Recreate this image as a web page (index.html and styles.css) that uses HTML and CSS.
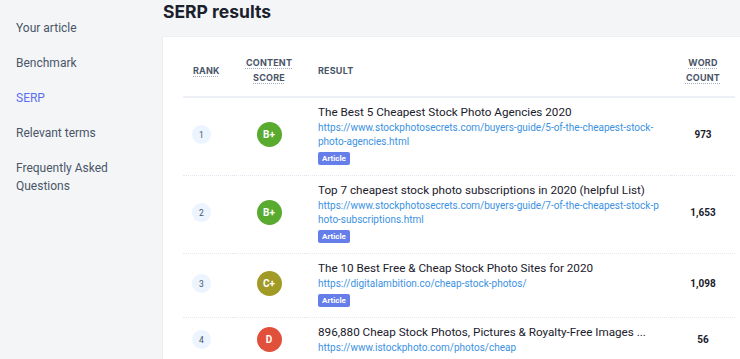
FILE: index.html
```html
<!DOCTYPE html>
<html lang="en">
<head>
    <meta charset="UTF-8">
    <meta name="viewport" content="width=device-width, initial-scale=1.0">
    <title>SERP results</title>
    <link rel="stylesheet" href="styles.css">
</head>
<body>

<div class="layout">
    <!-- Sidebar navigation -->
    <nav class="sidebar">
        <a href="#" class="nav-item">Your article</a>
        <a href="#" class="nav-item">Benchmark</a>
        <a href="#" class="nav-item active">SERP</a>
        <a href="#" class="nav-item">Relevant terms</a>
        <a href="#" class="nav-item">Frequently Asked Questions</a>
    </nav>

    <main class="content">
        <h1>SERP results</h1>

        <div class="card">
            <table class="serp">
                <colgroup>
                    <col class="col-rank">
                    <col class="col-score">
                    <col class="col-result">
                    <col class="col-words">
                </colgroup>
                <thead>
                    <tr>
                        <th class="th-rank"><abbr>Rank</abbr></th>
                        <th class="th-score"><abbr>Content score</abbr></th>
                        <th class="th-result">Result</th>
                        <th class="th-words"><abbr>Word count</abbr></th>
                    </tr>
                </thead>
                <tbody>
                    <tr>
                        <td><span class="rank">1</span></td>
                        <td class="center"><span class="score score-b">B+</span></td>
                        <td class="result">
                            <div class="result-inner">
                                <div class="title">The Best 5 Cheapest Stock Photo Agencies 2020</div>
                                <a class="url" href="#">https://www.stockphotosecrets.com/buyers-guide/5-of-the-cheapest-stock-photo-agencies.html</a>
                                <span class="badge">Article</span>
                            </div>
                        </td>
                        <td class="words">973</td>
                    </tr>
                    <tr>
                        <td><span class="rank">2</span></td>
                        <td class="center"><span class="score score-b">B+</span></td>
                        <td class="result">
                            <div class="result-inner">
                                <div class="title">Top 7 cheapest stock photo subscriptions in 2020 (helpful List)</div>
                                <a class="url" href="#">https://www.stockphotosecrets.com/buyers-guide/7-of-the-cheapest-stock-p<wbr>hoto-subscriptions.html</a>
                                <span class="badge">Article</span>
                            </div>
                        </td>
                        <td class="words">1,653</td>
                    </tr>
                    <tr>
                        <td><span class="rank">3</span></td>
                        <td class="center"><span class="score score-c">C+</span></td>
                        <td class="result">
                            <div class="result-inner">
                                <div class="title">The 10 Best Free &amp; Cheap Stock Photo Sites for 2020</div>
                                <a class="url" href="#">https://digitalambition.co/cheap-stock-photos/</a>
                                <span class="badge">Article</span>
                            </div>
                        </td>
                        <td class="words">1,098</td>
                    </tr>
                    <tr>
                        <td><span class="rank">4</span></td>
                        <td class="center"><span class="score score-d">D</span></td>
                        <td class="result">
                            <div class="result-inner">
                                <div class="title">896,880 Cheap Stock Photos, Pictures &amp; Royalty-Free Images ...</div>
                                <a class="url" href="#">https://www.istockphoto.com/photos/cheap</a>
                            </div>
                        </td>
                        <td class="words">56</td>
                    </tr>
                </tbody>
            </table>
        </div>
    </main>
</div>

</body>
</html>
```
FILE: styles.css
```css
body {
    font-family: 'Roboto', 'Noto Sans', sans-serif;
    margin: 0;
    padding: 0;
    background: #f4f5f7;
    color: #1a202c;
    overflow: hidden;
}
.layout {
    display: flex;
    height: 359px;
}
.sidebar {
    width: 163px;
    flex-shrink: 0;
    padding: 10px 16px 0;
    box-sizing: border-box;
    display: flex;
    flex-direction: column;
}
.nav-item {
    font-size: 12px;
    line-height: 18px;
    padding: 8.5px 0;
    color: #4a5568;
    text-decoration: none;
}
.nav-item.active {
    color: #5a6ff0;
}
.content {
    flex: 1;
    min-width: 0;
}
h1 {
    font-family: 'Inter', sans-serif;
    font-size: 17.5px;
    font-weight: 700;
    line-height: 24px;
    margin: 0 0 13px;
    color: #1a202c;
}
.card {
    background: #fff;
    box-shadow: 0 0 1px rgba(0, 0, 0, 0.15);
    padding: 0 5px 0 20px;
    height: 400px;
}
.serp {
    width: 100%;
    border-collapse: collapse;
    table-layout: fixed;
}
.col-rank { width: 50px; }
.col-score { width: 72px; }
.col-words { width: 64px; }
.serp th {
    font-family: 'Inter', sans-serif;
    font-size: 9px;
    font-weight: 700;
    text-transform: uppercase;
    color: #4a5568;
    line-height: 15px;
    padding: 18px 0 11px;
    border-bottom: 2px solid #edf0f4;
    letter-spacing: 0.2px;
}
.serp abbr {
    text-decoration: underline dotted #a0aec0;
    text-underline-offset: 2px;
}
.th-rank {
    text-align: left;
    padding-left: 10px !important;
}
.th-score,
.th-words {
    text-align: center;
}
.th-result {
    text-align: left;
    padding-left: 13px !important;
}
.serp td {
    padding: 6px 0 10px;
    vertical-align: middle;
    border-bottom: 1px dotted #e2e8f0;
}
.rank {
    display: flex;
    align-items: center;
    justify-content: center;
    width: 19px;
    height: 19px;
    margin-left: 9px;
    border-radius: 50%;
    background: #ebf4ff;
    color: #4a5568;
    font-size: 8.5px;
}
.center {
    text-align: center;
}
.score {
    display: inline-flex;
    align-items: center;
    justify-content: center;
    width: 25px;
    height: 25px;
    border-radius: 50%;
    color: #fff;
    font-size: 10px;
    font-weight: 700;
    vertical-align: middle;
}
.score-b { background: #59ab2f; }
.score-c { background: #a29a27; }
.score-d { background: #e0503a; }
.result {
    padding-left: 13px !important;
    padding-right: 8px !important;
}
.result-inner {
    display: flex;
    flex-direction: column;
    align-items: flex-start;
}
.title {
    font-size: 11.7px;
    line-height: 17px;
    color: #1a202c;
    white-space: nowrap;
    overflow: hidden;
    max-width: 100%;
}
.url {
    display: block;
    font-size: 10px;
    line-height: 14px;
    color: #3b92e2;
    text-decoration: none;
}
.badge {
    margin-top: 3px;
    background: #667eea;
    color: #fff;
    font-size: 8px;
    font-weight: 700;
    line-height: 13px;
    padding: 0 4px;
    border-radius: 2px;
}
.words {
    text-align: center;
    font-size: 10px;
    font-weight: 700;
    color: #1a202c;
}
```
